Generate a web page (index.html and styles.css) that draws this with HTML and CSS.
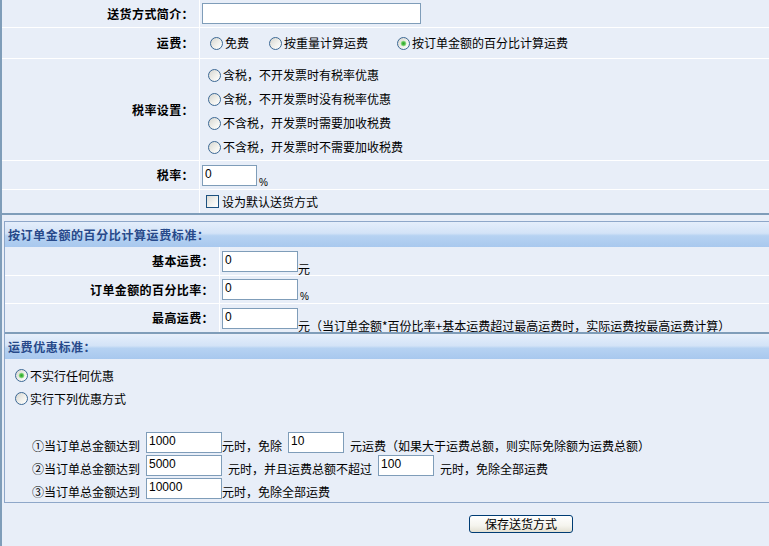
FILE: index.html
```html
<!DOCTYPE html>
<html lang="zh-CN">
<head>
<meta charset="utf-8">
<title>送货方式</title>
<link rel="stylesheet" href="styles.css">
</head>
<body>
<div class="page">
  <div class="top">
    <div class="row r1">
      <div class="lbl">送货方式简介：</div>
      <div class="val"><input class="txt w-intro" type="text"></div>
    </div>
    <div class="row r2">
      <div class="lbl">运费：</div>
      <div class="val">
        <label class="opt m8"><input type="radio" name="fee"><span>免费</span></label>
        <label class="opt m20"><input type="radio" name="fee"><span>按重量计算运费</span></label>
        <label class="opt m29"><input type="radio" name="fee" checked><span>按订单金额的百分比计算运费</span></label>
      </div>
    </div>
    <div class="row r3">
      <div class="lbl">税率设置：</div>
      <div class="val stack">
        <label class="opt m8 line24"><input type="radio" name="tax"><span>含税，不开发票时有税率优惠</span></label>
        <label class="opt m8 line24"><input type="radio" name="tax"><span>含税，不开发票时没有税率优惠</span></label>
        <label class="opt m8 line24"><input type="radio" name="tax"><span>不含税，开发票时需要加收税费</span></label>
        <label class="opt m8 line24"><input type="radio" name="tax"><span>不含税，开发票时不需要加收税费</span></label>
      </div>
    </div>
    <div class="row r4">
      <div class="lbl">税率：</div>
      <div class="val"><input class="txt w-rate" type="text" value="0"><span class="unit pct">%</span></div>
    </div>
    <div class="row r5">
      <div class="lbl"></div>
      <div class="val"><label class="opt m6"><input type="checkbox"><span class="cbtext">设为默认送货方式</span></label></div>
    </div>
  </div>

  <div class="box">
    <div class="head">按订单金额的百分比计算运费标准：</div>
    <div class="srow s1">
      <div class="slbl">基本运费：</div>
      <div class="sval"><input class="txt w76" type="text" value="0"><span class="unit">元</span></div>
    </div>
    <div class="srow s2">
      <div class="slbl">订单金额的百分比率：</div>
      <div class="sval"><input class="txt w76" type="text" value="0"><span class="unit pct">%</span></div>
    </div>
    <div class="srow s3">
      <div class="slbl">最高运费：</div>
      <div class="sval"><input class="txt w76" type="text" value="0"><span class="unit">元（当订单金额*百份比率+基本运费超过最高运费时，实际运费按最高运费计算）</span></div>
    </div>
    <div class="head head2">运费优惠标准：</div>
    <div class="discount">
      <label class="opt m10 line23"><input type="radio" name="disc" checked><span>不实行任何优惠</span></label>
      <label class="opt m10 line23"><input type="radio" name="disc"><span>实行下列优惠方式</span></label>
      <div class="rules">
        <div class="rule">
          <span class="t">①当订单总金额达到</span>
          <input class="txt w76 sp" type="text" value="1000">
          <span class="t">元时，免除</span>
          <input class="txt w56 sp" type="text" value="10">
          <span class="t sp">元运费（如果大于运费总额，则实际免除额为运费总额）</span>
        </div>
        <div class="rule">
          <span class="t">②当订单总金额达到</span>
          <input class="txt w76 sp" type="text" value="5000">
          <span class="t sp">元时，并且运费总额不超过</span>
          <input class="txt w56 sp" type="text" value="100">
          <span class="t sp">元时，免除全部运费</span>
        </div>
        <div class="rule">
          <span class="t">③当订单总金额达到</span>
          <input class="txt w76 sp" type="text" value="10000">
          <span class="t">元时，免除全部运费</span>
        </div>
      </div>
    </div>
  </div>

  <div class="actions"><button type="button" class="btn">保存送货方式</button></div>
</div>
</body>
</html>
```

FILE: styles.css
```css
html, body {
  margin: 0;
  padding: 0;
  overflow: hidden;
  background: #e8eef8;
}
body {
  font-family: "Noto Sans CJK SC", "Liberation Sans", sans-serif;
  font-size: 12px;
  line-height: 16px;
  color: #000;
}
.page {
  min-height: 546px;
  border-left: 2px solid #7f9db9;
  overflow: hidden;
}

/* top table */
.top {
  border-bottom: 2px solid #7f9db9;
}
.row {
  display: flex;
  border-bottom: 1px solid #fff;
}
.row.r5 { border-bottom: none; }
.r1 { height: 27px; }
.r2 { height: 30px; }
.r3 { height: 101px; }
.r4 { height: 28px; }
.r5 { height: 23px; }
.lbl {
  width: 198px;
  flex: none;
  box-sizing: border-box;
  border-right: 1px solid #fff;
  padding-right: 5px;
  display: flex;
  align-items: center;
  justify-content: flex-end;
  font-weight: bold;
  letter-spacing: 0.4px;
}
.val {
  flex: 1;
  min-width: 0;
  display: flex;
  align-items: center;
  padding-left: 2px;
  white-space: nowrap;
}
.val.stack {
  flex-direction: column;
  align-items: flex-start;
  justify-content: flex-start;
  padding-top: 4px;
  padding-left: 0;
}

/* inputs */
.txt {
  box-sizing: border-box;
  height: 21px;
  border: 1px solid #7f9db9;
  background: #fff;
  margin: 0;
  padding: 0 2px 3px;
  font-family: "Liberation Sans", "Noto Sans CJK SC", sans-serif;
  font-size: 12px;
  color: #000;
  outline: none;
  flex: none;
}
.w-intro { width: 219px; }
.w-rate { width: 55px; }
.w76 { width: 76px; }
.w56 { width: 56px; }

.unit {
  align-self: flex-end;
  line-height: 14px;
  margin-bottom: -1px;
}
.unit.pct {
  font-family: "Liberation Sans", sans-serif;
  font-size: 10px;
  margin-left: 2px;
}

/* radios / checkbox */
.opt {
  display: flex;
  align-items: center;
  white-space: nowrap;
}
.opt span { margin-left: 2px; }
.m6 { margin-left: 4px; }
.m8 { margin-left: 8px; }
.m10 { margin-left: 10px; }
.m20 { margin-left: 20px; }
.m29 { margin-left: 29px; }
.line24 { height: 24px; }
.line23 { height: 23px; }

input[type="radio"] {
  appearance: none;
  -webkit-appearance: none;
  width: 13px;
  height: 13px;
  margin: 0;
  border: 1px solid #3c6894;
  border-radius: 50%;
  box-sizing: border-box;
  background: linear-gradient(135deg, #d6d6d0 0%, #f2f2ee 60%, #ffffff 100%);
  flex: none;
}
input[type="radio"]:checked {
  background:
    radial-gradient(circle at 50% 50%, #2fa22f 0, #52c14a 1.6px, #a8e29c 2.6px, rgba(255,255,255,0) 3.2px),
    linear-gradient(135deg, #d6d6d0 0%, #f2f2ee 60%, #ffffff 100%);
}
input[type="checkbox"] {
  appearance: none;
  -webkit-appearance: none;
  width: 13px;
  height: 13px;
  margin: 0;
  border: 1px solid #1c5180;
  box-sizing: border-box;
  background: linear-gradient(135deg, #dcdcd7 0%, #f4f4f1 60%, #ffffff 100%);
  flex: none;
}
.cbtext { margin-left: 3px !important; }

/* box */
.box {
  margin: 6px 0 0 2px;
  border: 1px solid #8ea7c9;
  border-right: none;
}
.head {
  height: 25px;
  box-sizing: border-box;
  padding: 0 0 0 3px;
  display: flex;
  align-items: center;
  font-weight: bold;
  letter-spacing: 0.6px;
  color: #27498a;
  background: linear-gradient(to bottom, #e4eefb 0%, #d3e3f7 45%, #b6d2f2 55%, #a8c8ee 100%);
}
.head2 {
  height: 24px;
  margin-top: 1px;
}
.srow {
  display: flex;
  border-bottom: 1px solid #fff;
}
.s1 { height: 28px; }
.s2 { height: 27px; }
.s3 { height: 28px; border-bottom: 2px solid #7f9db9; }
.slbl {
  width: 215px;
  flex: none;
  box-sizing: border-box;
  border-right: 1px solid #fff;
  padding-right: 5px;
  display: flex;
  align-items: center;
  justify-content: flex-end;
  font-weight: bold;
  letter-spacing: 0.4px;
}
.sval {
  flex: 1;
  min-width: 0;
  display: flex;
  align-items: center;
  padding-left: 2px;
  white-space: nowrap;
}

.discount {
  padding: 5px 0 3px 0;
}
.rules {
  margin-top: 22px;
  padding-left: 27px;
}
.rule {
  display: flex;
  align-items: flex-end;
  height: 21px;
  margin-bottom: 2px;
  white-space: nowrap;
}
.rule:last-child { margin-bottom: 0; }
.rule .t {
  line-height: 14px;
}
.sp { margin-left: 6px; }

/* actions */
.actions {
  padding: 12px 0 0 467px;
}
.btn {
  width: 104px;
  height: 18px;
  box-sizing: border-box;
  padding: 0;
  border: 1px solid #003c74;
  border-radius: 3px;
  background: linear-gradient(to bottom, #ffffff 0%, #f5f4ee 60%, #e3e0d2 100%);
  font-family: "Noto Sans CJK SC", sans-serif;
  font-size: 12px;
  line-height: 14px;
  color: #000;
}
```
